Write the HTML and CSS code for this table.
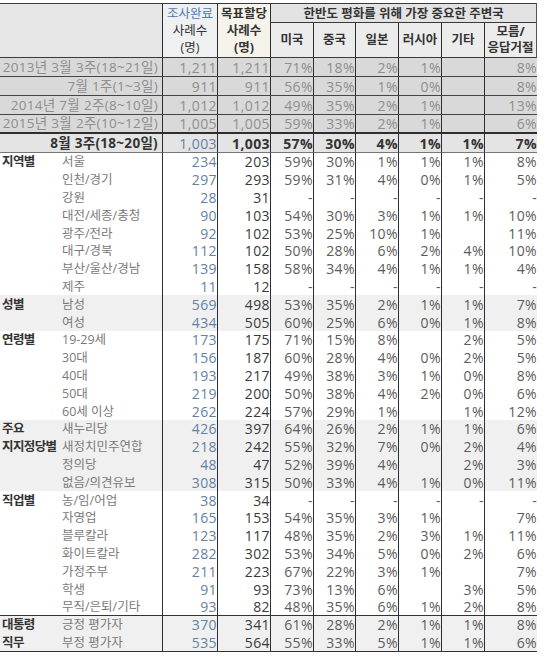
FILE: index.html
```html
<!DOCTYPE html>
<html lang="ko">
<head>
<meta charset="utf-8">
<title>한반도 평화를 위해 가장 중요한 주변국</title>
<link rel="stylesheet" href="styles.css">
</head>
<body>
<div class="sheet">
<table class="poll">
<colgroup>
<col class="c-grp"><col class="c-sub"><col class="c-n"><col class="c-t">
<col class="c-p"><col class="c-p2"><col class="c-p"><col class="c-p"><col class="c-p"><col class="c-last">
</colgroup>
<thead>
<tr class="h1">
<th class="corner" colspan="2" rowspan="2"></th>
<th class="hn" rowspan="2"><span class="hn1">조사완료</span><br>사례수<br>(명)</th>
<th class="ht" rowspan="2">목표할당<br>사례수<br>(명)</th>
<th class="hq" colspan="6">한반도 평화를 위해 가장 중요한 주변국</th>
</tr>
<tr class="h2">
<th>미국</th><th>중국</th><th>일본</th><th>러시아</th><th>기타</th><th class="last">모름/<br>응답거절</th>
</tr>
</thead>
<tbody class="trend">
<tr><td class="lbl" colspan="2">2013년 3월 3주(18~21일)</td><td class="n">1,211</td><td class="t">1,211</td><td class="p">71%</td><td class="p">18%</td><td class="p">2%</td><td class="p">1%</td><td class="p"></td><td class="p">8%</td></tr>
<tr><td class="lbl" colspan="2">7월 1주(1~3일)</td><td class="n">911</td><td class="t">911</td><td class="p">56%</td><td class="p">35%</td><td class="p">1%</td><td class="p">0%</td><td class="p"></td><td class="p">8%</td></tr>
<tr><td class="lbl" colspan="2">2014년 7월 2주(8~10일)</td><td class="n">1,012</td><td class="t">1,012</td><td class="p">49%</td><td class="p">35%</td><td class="p">2%</td><td class="p">1%</td><td class="p"></td><td class="p">13%</td></tr>
<tr class="pre"><td class="lbl" colspan="2">2015년 3월 2주(10~12일)</td><td class="n">1,005</td><td class="t">1,005</td><td class="p">59%</td><td class="p">33%</td><td class="p">2%</td><td class="p">1%</td><td class="p"></td><td class="p">6%</td></tr>
<tr class="cur"><td class="lbl" colspan="2">8월 3주(18~20일)</td><td class="n">1,003</td><td class="t">1,003</td><td class="p">57%</td><td class="p">30%</td><td class="p">4%</td><td class="p">1%</td><td class="p">1%</td><td class="p">7%</td></tr>
</tbody>
<tbody class="detail">
<tr><td class="grp">지역별</td><td class="sub">서울</td><td class="n">234</td><td class="t">203</td><td class="p">59%</td><td class="p">30%</td><td class="p">1%</td><td class="p">1%</td><td class="p">1%</td><td class="p">8%</td></tr>
<tr><td class="grp"></td><td class="sub">인천/경기</td><td class="n">297</td><td class="t">293</td><td class="p">59%</td><td class="p">31%</td><td class="p">4%</td><td class="p">0%</td><td class="p">1%</td><td class="p">5%</td></tr>
<tr><td class="grp"></td><td class="sub">강원</td><td class="n">28</td><td class="t">31</td><td class="p">-</td><td class="p">-</td><td class="p">-</td><td class="p">-</td><td class="p">-</td><td class="p">-</td></tr>
<tr><td class="grp"></td><td class="sub">대전/세종/충청</td><td class="n">90</td><td class="t">103</td><td class="p">54%</td><td class="p">30%</td><td class="p">3%</td><td class="p">1%</td><td class="p">1%</td><td class="p">10%</td></tr>
<tr><td class="grp"></td><td class="sub">광주/전라</td><td class="n">92</td><td class="t">102</td><td class="p">53%</td><td class="p">25%</td><td class="p">10%</td><td class="p">1%</td><td class="p"></td><td class="p">11%</td></tr>
<tr><td class="grp"></td><td class="sub">대구/경북</td><td class="n">112</td><td class="t">102</td><td class="p">50%</td><td class="p">28%</td><td class="p">6%</td><td class="p">2%</td><td class="p">4%</td><td class="p">10%</td></tr>
<tr><td class="grp"></td><td class="sub">부산/울산/경남</td><td class="n">139</td><td class="t">158</td><td class="p">58%</td><td class="p">34%</td><td class="p">4%</td><td class="p">1%</td><td class="p">1%</td><td class="p">4%</td></tr>
<tr><td class="grp"></td><td class="sub">제주</td><td class="n">11</td><td class="t">12</td><td class="p">-</td><td class="p">-</td><td class="p">-</td><td class="p">-</td><td class="p">-</td><td class="p">-</td></tr>
<tr class="shade"><td class="grp">성별</td><td class="sub">남성</td><td class="n">569</td><td class="t">498</td><td class="p">53%</td><td class="p">35%</td><td class="p">2%</td><td class="p">1%</td><td class="p">1%</td><td class="p">7%</td></tr>
<tr class="shade"><td class="grp"></td><td class="sub">여성</td><td class="n">434</td><td class="t">505</td><td class="p">60%</td><td class="p">25%</td><td class="p">6%</td><td class="p">0%</td><td class="p">1%</td><td class="p">8%</td></tr>
<tr><td class="grp">연령별</td><td class="sub">19-29세</td><td class="n">173</td><td class="t">175</td><td class="p">71%</td><td class="p">15%</td><td class="p">8%</td><td class="p"></td><td class="p">2%</td><td class="p">5%</td></tr>
<tr><td class="grp"></td><td class="sub">30대</td><td class="n">156</td><td class="t">187</td><td class="p">60%</td><td class="p">28%</td><td class="p">4%</td><td class="p">0%</td><td class="p">2%</td><td class="p">5%</td></tr>
<tr><td class="grp"></td><td class="sub">40대</td><td class="n">193</td><td class="t">217</td><td class="p">49%</td><td class="p">38%</td><td class="p">3%</td><td class="p">1%</td><td class="p">0%</td><td class="p">8%</td></tr>
<tr><td class="grp"></td><td class="sub">50대</td><td class="n">219</td><td class="t">200</td><td class="p">50%</td><td class="p">38%</td><td class="p">4%</td><td class="p">2%</td><td class="p">0%</td><td class="p">6%</td></tr>
<tr><td class="grp"></td><td class="sub">60세 이상</td><td class="n">262</td><td class="t">224</td><td class="p">57%</td><td class="p">29%</td><td class="p">1%</td><td class="p"></td><td class="p">1%</td><td class="p">12%</td></tr>
<tr class="shade"><td class="grp">주요</td><td class="sub">새누리당</td><td class="n">426</td><td class="t">397</td><td class="p">64%</td><td class="p">26%</td><td class="p">2%</td><td class="p">1%</td><td class="p">1%</td><td class="p">6%</td></tr>
<tr class="shade"><td class="grp">지지정당별</td><td class="sub">새정치민주연합</td><td class="n">218</td><td class="t">242</td><td class="p">55%</td><td class="p">32%</td><td class="p">7%</td><td class="p">0%</td><td class="p">2%</td><td class="p">4%</td></tr>
<tr class="shade"><td class="grp"></td><td class="sub">정의당</td><td class="n">48</td><td class="t">47</td><td class="p">52%</td><td class="p">39%</td><td class="p">4%</td><td class="p"></td><td class="p">2%</td><td class="p">3%</td></tr>
<tr class="shade"><td class="grp"></td><td class="sub">없음/의견유보</td><td class="n">308</td><td class="t">315</td><td class="p">50%</td><td class="p">33%</td><td class="p">4%</td><td class="p">1%</td><td class="p">0%</td><td class="p">11%</td></tr>
<tr><td class="grp">직업별</td><td class="sub">농/임/어업</td><td class="n">38</td><td class="t">34</td><td class="p">-</td><td class="p">-</td><td class="p">-</td><td class="p">-</td><td class="p">-</td><td class="p">-</td></tr>
<tr><td class="grp"></td><td class="sub">자영업</td><td class="n">165</td><td class="t">153</td><td class="p">54%</td><td class="p">35%</td><td class="p">3%</td><td class="p">1%</td><td class="p"></td><td class="p">7%</td></tr>
<tr><td class="grp"></td><td class="sub">블루칼라</td><td class="n">123</td><td class="t">117</td><td class="p">48%</td><td class="p">35%</td><td class="p">2%</td><td class="p">3%</td><td class="p">1%</td><td class="p">11%</td></tr>
<tr><td class="grp"></td><td class="sub">화이트칼라</td><td class="n">282</td><td class="t">302</td><td class="p">53%</td><td class="p">34%</td><td class="p">5%</td><td class="p">0%</td><td class="p">2%</td><td class="p">6%</td></tr>
<tr><td class="grp"></td><td class="sub">가정주부</td><td class="n">211</td><td class="t">223</td><td class="p">67%</td><td class="p">22%</td><td class="p">3%</td><td class="p">1%</td><td class="p"></td><td class="p">7%</td></tr>
<tr><td class="grp"></td><td class="sub">학생</td><td class="n">91</td><td class="t">93</td><td class="p">73%</td><td class="p">13%</td><td class="p">6%</td><td class="p"></td><td class="p">3%</td><td class="p">5%</td></tr>
<tr class="pres-pre"><td class="grp"></td><td class="sub">무직/은퇴/기타</td><td class="n">93</td><td class="t">82</td><td class="p">48%</td><td class="p">35%</td><td class="p">6%</td><td class="p">1%</td><td class="p">2%</td><td class="p">8%</td></tr>
<tr class="shade"><td class="grp">대통령</td><td class="sub">긍정 평가자</td><td class="n">370</td><td class="t">341</td><td class="p">61%</td><td class="p">28%</td><td class="p">2%</td><td class="p">1%</td><td class="p">1%</td><td class="p">8%</td></tr>
<tr class="shade"><td class="grp">직무</td><td class="sub">부정 평가자</td><td class="n">535</td><td class="t">564</td><td class="p">55%</td><td class="p">33%</td><td class="p">5%</td><td class="p">1%</td><td class="p">1%</td><td class="p">6%</td></tr>
</tbody>
</table>
</div>
</body>
</html>
```

FILE: styles.css
```css
html, body {
  margin: 0;
  padding: 0;
  background: #ffffff;
}

body {
  font-family: "Open Sans", "Noto Sans CJK KR", sans-serif;
  font-size: 14px;
  color: #333333;
}

.sheet {
  padding-top: 3px;
}

.poll {
  border-collapse: separate;
  border-spacing: 0;
  table-layout: fixed;
  width: 537px;
  border-bottom: 1px solid #333333;
}

.c-grp { width: 60px; }
.c-sub { width: 102px; }
.c-n { width: 55px; }
.c-t { width: 53px; }
.c-p { width: 43px; }
.c-p2 { width: 42px; }
.c-last { width: 53px; }

/* ---------- header ---------- */
.poll th {
  padding: 0;
  font-size: 12.5px;
  font-weight: bold;
  color: #333333;
  line-height: 17px;
  text-align: center;
  vertical-align: middle;
  white-space: nowrap;
}

.h1 { height: 20px; }
.h2 { height: 35px; }

.h1 th {
  border-top: 1px solid #3a3a3a;
}

.corner {
  background: #e6e6e6;
  border-bottom: 1px solid #3a3a3a;
}

.hn {
  background: #eef0f2;
  color: #6d8db3;
  font-weight: normal !important;
  border-left: 1px solid #2e2e2e;
  border-bottom: 1px solid #3a3a3a;
}

.hn1 {
  color: #4f7bb0;
}

.ht {
  background: #f6f3ea;
  border-left: 1px solid #2e2e2e;
  border-bottom: 1px solid #3a3a3a;
}

.hq {
  background: #e3e3e3;
  border-left: 1px solid #2e2e2e;
  border-bottom: 1px solid #3a3a3a;
  border-right: 1px solid #555555;
}

.h2 th {
  background: #ececec;
  border-left: 1px solid #2e2e2e;
  border-bottom: 1px solid #3a3a3a;
  line-height: 16px;
}

.h2 th.last {
  border-right: 1px solid #555555;
}

/* ---------- body cells ---------- */
.poll td {
  padding: 0;
  white-space: nowrap;
  vertical-align: middle;
  line-height: 15px;
}

.n, .t, .p {
  text-align: right;
  letter-spacing: 0.4px;
  border-left: 1px solid #2e2e2e;
}

.n {
  padding-right: 8px;
  color: #6482a6;
}

.t {
  padding-right: 8px;
  color: #3a3a3a;
}

.p {
  padding-right: 4px;
  color: #5c5c5c;
}

.grp {
  font-size: 12.5px;
  font-weight: bold;
  color: #333333;
  padding-left: 2px !important;
  letter-spacing: -0.6px;
}

.sub {
  font-size: 12.5px;
  color: #7a7a7a;
  padding-left: 2px !important;
}

/* ---------- trend rows ---------- */
.trend tr { height: 19px; }

.trend td {
  background: #d9d9d9;
  color: #8e8e8e;
  border-bottom: 1px solid #454545;
}

.trend .lbl {
  font-size: 13.5px;
  letter-spacing: 0.3px;
  text-align: right;
  padding-right: 4px;
}

.trend .pre td {
  border-bottom: 2px solid #2e2e2e;
}

.trend .cur td {
  background: #e4e4e4;
  color: #333333;
  font-weight: bold;
  border-bottom: 1px solid #777777;
}

.trend .cur td.n {
  font-weight: normal;
  color: #6482a6;
}

/* ---------- detail rows ---------- */
.detail tr { height: 17.8px; }

.detail tr.shade td {
  background: #f0f0f0;
}

.detail tr.pres-pre td {
  border-bottom: 1px solid #333333;
}
```
